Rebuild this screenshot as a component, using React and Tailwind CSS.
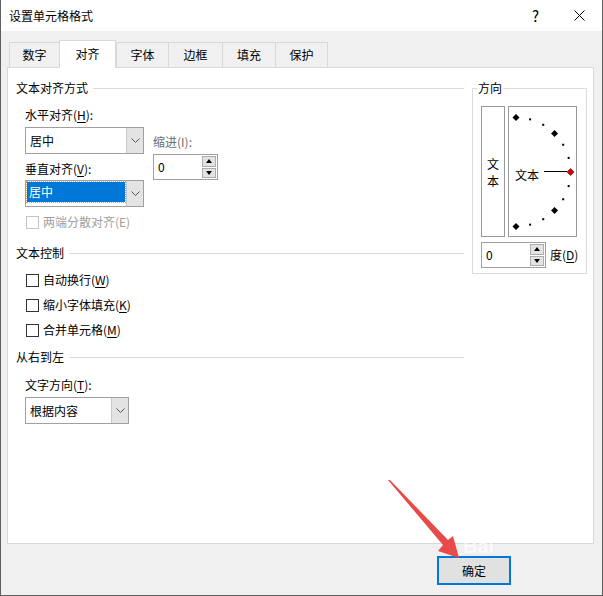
import React from "react";

const font = "font-['Noto_Sans_CJK_SC',sans-serif]";

const Chevron = () => (
  <svg width="9" height="6" viewBox="0 0 9 6">
    <path d="M0.5 0.5 L4.5 4.5 L8.5 0.5" fill="none" stroke="#555" strokeWidth="1" />
  </svg>
);

const Key = ({ children }) => <span className="underline underline-offset-[2px]">{children}</span>;

const GroupHeader = ({ label }) => (
  <div className="flex items-center h-[16px] leading-[16px]">
    <span>{label}</span>
    <div className="flex-1 h-px bg-[#dcdcdc] ml-[5px]" />
  </div>
);

const Select = ({ width, value, focused }) => (
  <div className={`flex h-[27px] border border-[#a0a0a0] bg-white ${width}`}>
    <div className="flex-1 flex items-center p-[1px]">
      {focused ? (
        <div className="w-full h-[20px] bg-[#0078d7] text-white flex items-center pl-[2px] outline-1 outline-dotted outline-[#f0a040] -mt-[4px]">
          {value}
        </div>
      ) : (
        <span className="pl-[3px]">{value}</span>
      )}
    </div>
    <div className="w-[17px] bg-[#e3e3e3] border-l border-[#c8c8c8] flex items-center justify-center">
      <Chevron />
    </div>
  </div>
);

const Spin = ({ width }) => (
  <div className={`flex h-[26px] border border-[#a0a0a0] bg-white ${width}`}>
    <div className="flex-1 flex items-center pl-[4px]">0</div>
    <div className="w-[16px] flex flex-col p-[1px] gap-[1px] bg-white">
      <div className="flex-1 bg-[#e3e3e3] border border-[#adadad] flex items-center justify-center">
        <svg width="6" height="4" viewBox="0 0 6 4"><path d="M3 0 L6 4 L0 4 Z" fill="#000" /></svg>
      </div>
      <div className="flex-1 bg-[#e3e3e3] border border-[#adadad] flex items-center justify-center">
        <svg width="6" height="4" viewBox="0 0 6 4"><path d="M0 0 L6 0 L3 4 Z" fill="#000" /></svg>
      </div>
    </div>
  </div>
);

const Check = ({ label, disabled }) => (
  <div className="flex items-center h-[16px] leading-[16px] pl-[10px]">
    <div className={`w-[13px] h-[13px] border bg-white ${disabled ? "border-[#c4c4c4]" : "border-[#333]"}`} />
    <span className={`ml-[4px] ${disabled ? "text-[#a0a0a0]" : ""}`}>{label}</span>
  </div>
);

// dial dots around a half circle, center (7,65) in the dial box
const Dial = () => {
  const cx = 7;
  const cy = 65;
  const r = 54.5;
  const marks = [];
  for (let a = -90; a <= 90; a += 15) {
    const rad = (a * Math.PI) / 180;
    const x = cx + r * Math.cos(rad);
    const y = cy - r * Math.sin(rad);
    const big = a % 45 === 0;
    if (a === 0) {
      marks.push(
        <path key={a} d={`M${x} ${y - 3.5} L${x + 3.5} ${y} L${x} ${y + 3.5} L${x - 3.5} ${y} Z`} fill="#e00000" stroke="#400" strokeWidth="0.6" />
      );
    } else if (big) {
      marks.push(<path key={a} d={`M${x} ${y - 3.5} L${x + 3.5} ${y} L${x} ${y + 3.5} L${x - 3.5} ${y} Z`} fill="#000" />);
    } else {
      marks.push(<rect key={a} x={x - 1} y={y - 1} width="2" height="2" fill="#000" />);
    }
  }
  return (
    <svg width="67" height="129" viewBox="0 0 67 129" className="absolute left-0 top-0">
      <line x1="35" y1="64.5" x2="58" y2="64.5" stroke="#000" strokeWidth="1" />
      {marks}
    </svg>
  );
};

const tabs = [
  { label: "数字", w: "w-[50px]" },
  { label: "对齐", w: "w-[57px]", active: true },
  { label: "字体", w: "w-[52px]" },
  { label: "边框", w: "w-[54px]" },
  { label: "填充", w: "w-[53px]" },
  { label: "保护", w: "w-[53px]", last: true },
];

export default function App() {
  return (
    <div className={`relative w-[603px] h-[596px] bg-[#f0f0f0] border-l border-r border-b border-[#5f5f5f] text-[12px] text-black overflow-hidden ${font}`}>
      {/* title bar */}
      <div className="h-[31px] bg-white flex items-center pl-[8px] leading-[16px]">
        <span>设置单元格格式</span>
        <span className="ml-auto text-[15px] mr-[35px]">?</span>
        <svg width="11" height="11" viewBox="0 0 11 11" className="mr-[17px]">
          <path d="M0.5 0.5 L10.5 10.5 M10.5 0.5 L0.5 10.5" stroke="#000" strokeWidth="1" />
        </svg>
      </div>

      {/* tabs */}
      <div className="relative z-10 flex items-end h-[28px] mt-[9px] pl-[8px]">
        {tabs.map((t) =>
          t.active ? (
            <div key={t.label} className={`${t.w} h-[28px] bg-white border-l border-t border-r border-[#d9d9d9] flex items-center justify-center pb-[1px]`}>
              {t.label}
            </div>
          ) : (
            <div
              key={t.label}
              className={`${t.w} h-[25px] mb-px border-t border-l ${t.last ? "border-r" : ""} border-[#d9d9d9] flex items-center justify-center`}
            >
              {t.label}
            </div>
          )
        )}
      </div>

      {/* panel */}
      <div className="-mt-px ml-[6px] w-[587px] h-[477px] bg-white border border-[#d9d9d9] flex pl-[8px] pt-[12px] leading-[16px]">
        <div className="w-[448px]">
          <GroupHeader label="文本对齐方式" />
          <div className="flex pl-[9px] mt-[11px]">
            <div className="w-[119px]">
              <div className="h-[16px]">水平对齐(<Key>H</Key>):</div>
              <div className="mt-[4px]">
                <Select width="w-[119px]" value="居中" />
              </div>
              <div className="h-[16px] mt-[7px]">垂直对齐(<Key>V</Key>):</div>
              <div className="mt-[3px]">
                <Select width="w-[119px]" value="居中" focused />
              </div>
            </div>
            <div className="ml-[9px] mt-[27px]">
              <div className="h-[16px] text-[#6d6d6d]">缩进(I):</div>
              <div className="mt-[4px]">
                <Spin width="w-[65px]" />
              </div>
            </div>
          </div>
          <div className="mt-[7px]">
            <Check label="两端分散对齐(E)" disabled />
          </div>

          <div className="mt-[15px]">
            <GroupHeader label="文本控制" />
          </div>
          <div className="mt-[11px] flex flex-col gap-[9px]">
            <Check label={<>自动换行(<Key>W</Key>)</>} />
            <Check label={<>缩小字体填充(<Key>K</Key>)</>} />
            <Check label={<>合并单元格(<Key>M</Key>)</>} />
          </div>

          <div className="mt-[11px]">
            <GroupHeader label="从右到左" />
          </div>
          <div className="pl-[9px] mt-[12px]">
            <div className="h-[16px]">文字方向(<Key>T</Key>):</div>
            <div className="mt-[4px]">
              <Select width="w-[104px]" value="根据内容" />
            </div>
          </div>
        </div>

        {/* orientation group */}
        <div className="ml-[8px] mt-[8px] relative w-[115px] h-[186px] border border-[#dcdcdc] pl-[8px] pt-[17px]">
          <span className="absolute -top-[9px] left-[4px] bg-white px-[1px] leading-[16px]">方向</span>
          <div className="flex">
            <div className="w-[24px] h-[131px] border border-[#999] flex flex-col items-center justify-center leading-[17px] pt-[1px]">
              <span>文</span>
              <span>本</span>
            </div>
            <div className="relative ml-[3px] w-[69px] h-[131px] border border-[#999]">
              <Dial />
              <span className="absolute left-[6px] top-[60px] leading-[16px]">文本</span>
            </div>
          </div>
          <div className="flex items-center mt-[5px]">
            <Spin width="w-[65px] h-[24px]" />
            <span className="ml-[4px]">度(<Key>D</Key>)</span>
          </div>
        </div>
      </div>

      {/* bottom buttons */}
      <div className="pt-[12px] pl-[436px]">
        <div className="w-[74px] h-[29px] border-2 border-[#0078d7] bg-[#e1e1e1] flex items-center justify-center leading-[16px]">
          确定
        </div>
      </div>

      {/* watermark + annotation arrow */}
      <span className="absolute left-[462px] top-[536px] leading-none text-[20px] font-bold text-white opacity-70 font-['Liberation_Sans',sans-serif]">Bai</span>
      <svg width="603" height="596" className="absolute left-0 top-0 pointer-events-none">
        <polygon points="387,480 389,480 447,540 452,536 458,558 437,551 442,545" fill="#e84a4a" />
      </svg>
    </div>
  );
}
